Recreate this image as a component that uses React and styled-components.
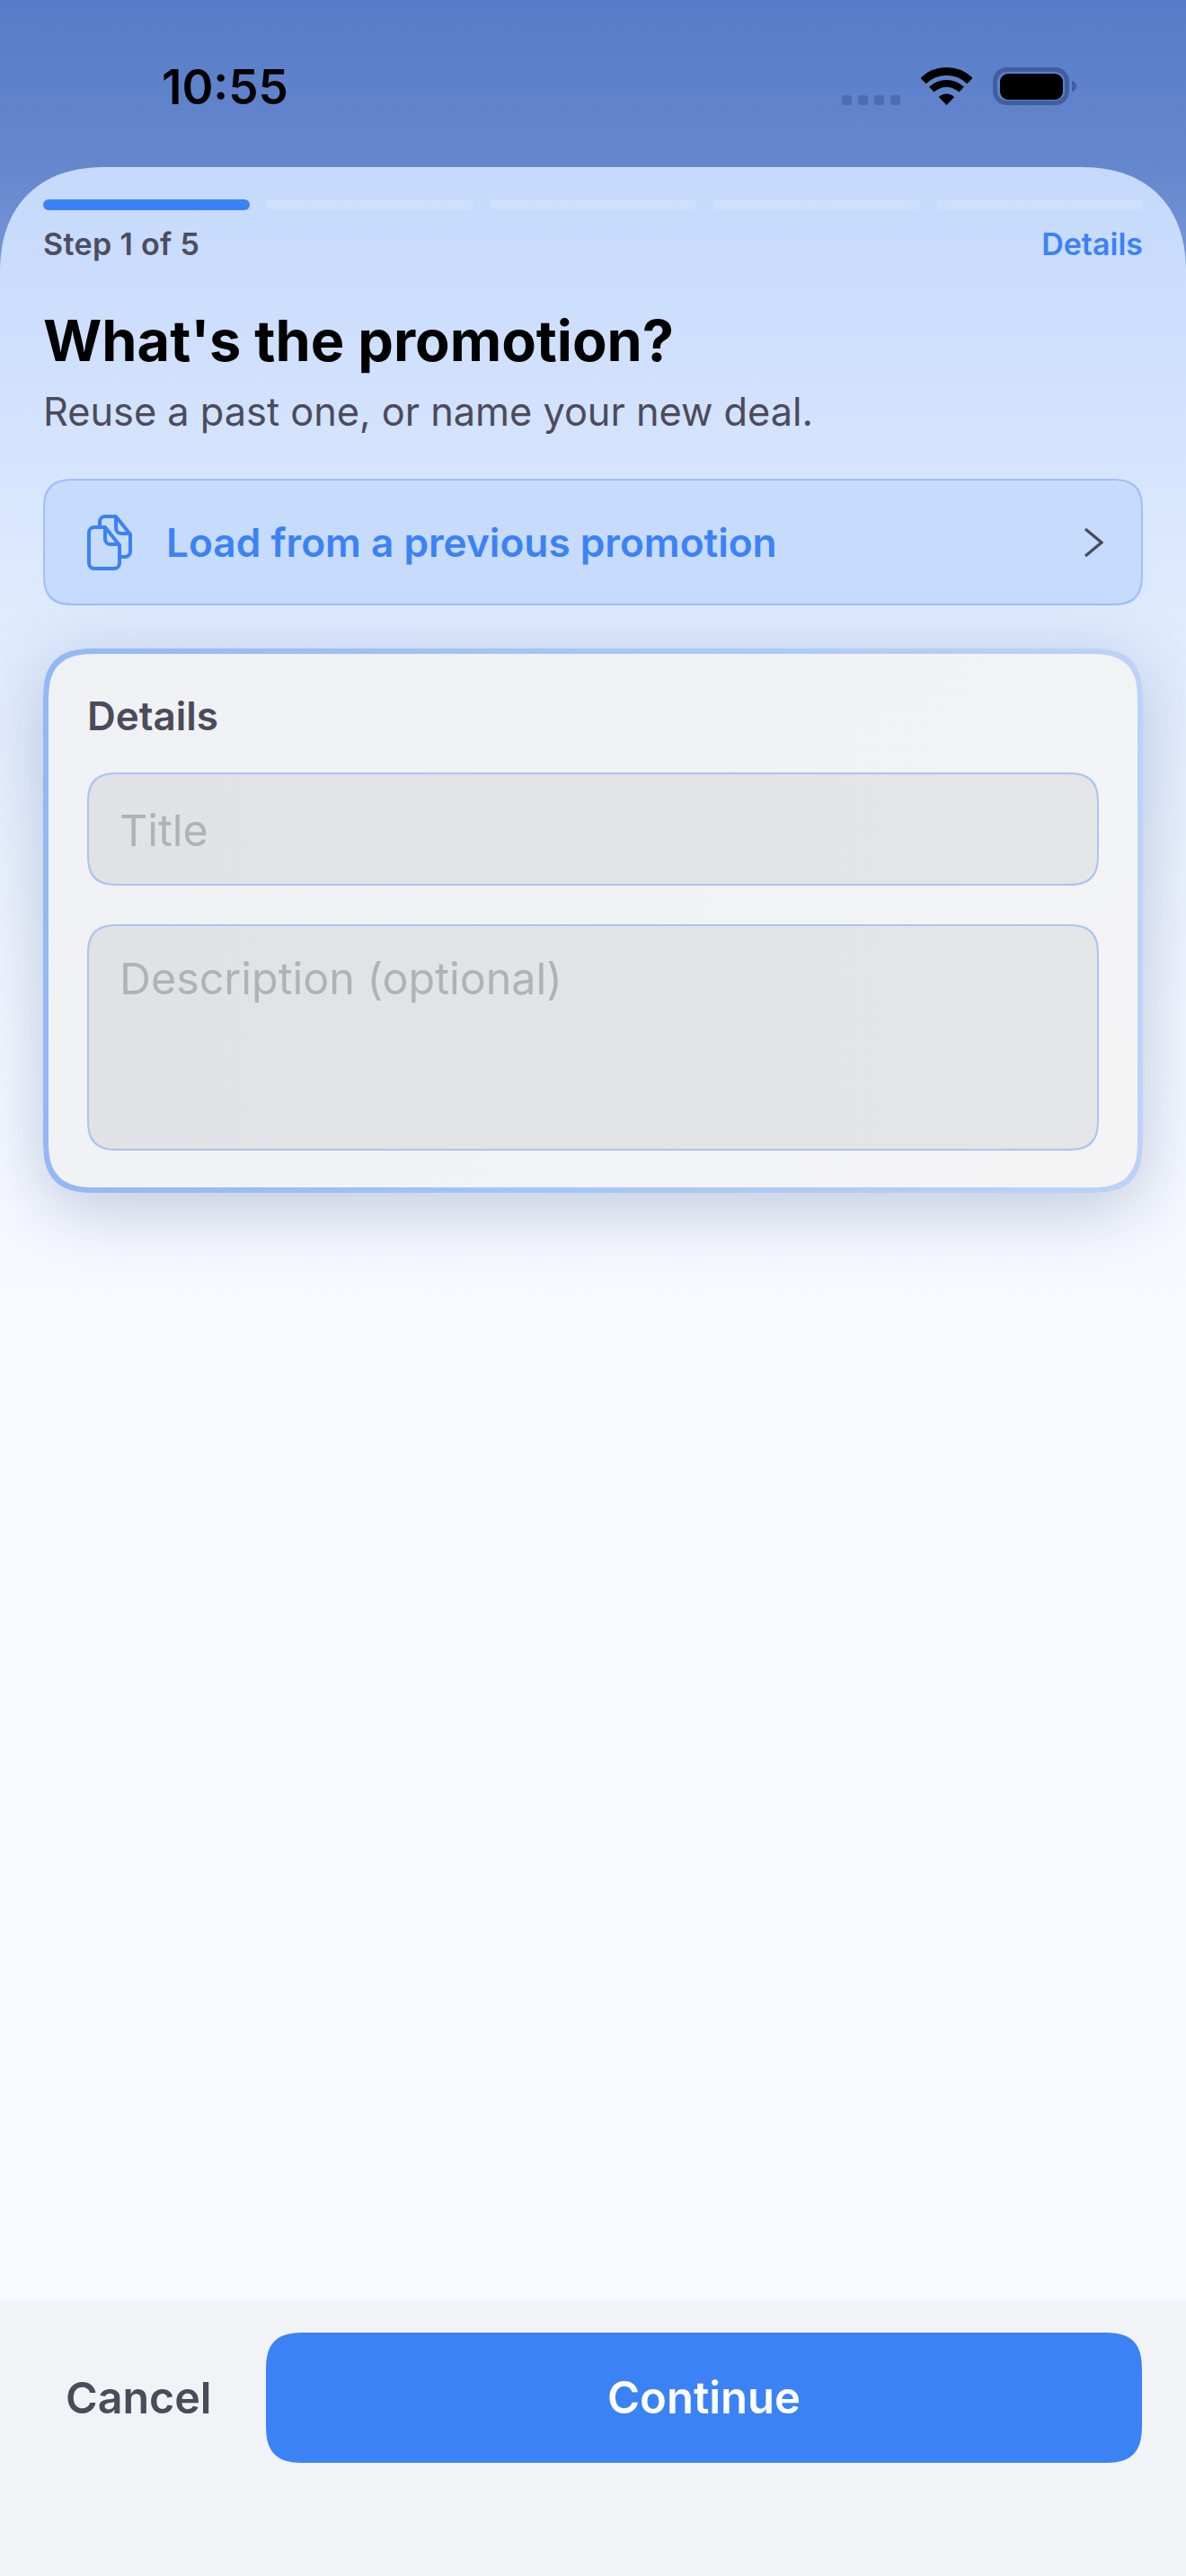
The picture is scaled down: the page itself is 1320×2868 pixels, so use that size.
import React from "react";
import styled, { createGlobalStyle } from "styled-components";

const GlobalStyle = createGlobalStyle`
  html, body {
    margin: 0;
    padding: 0;
    background: #f1f3f7;
  }
  * {
    box-sizing: border-box;
  }
`;

const Screen = styled.div`
  width: 1320px;
  height: 2868px;
  display: flex;
  flex-direction: column;
  overflow: hidden;
  font-family: Inter, "Noto Sans", sans-serif;
  background: linear-gradient(180deg, #567cc9 0, #6587cd 186px, #7d9cdc 340px);
`;

const StatusBar = styled.div`
  height: 186px;
  flex: none;
  display: flex;
  justify-content: space-between;
  align-items: flex-start;
  padding: 72px 122px 0 180px;
`;

const Clock = styled.div`
  font-size: 53px;
  line-height: 50px;
  font-weight: 600;
  color: #000;
`;

const StatusIcons = styled.div`
  height: 45px;
  display: flex;
  align-items: flex-end;
  gap: 23px;
`;

const Signal = styled.div`
  display: flex;
  gap: 7px;
`;

const SignalDot = styled.span`
  width: 11px;
  height: 11px;
  border-radius: 3px;
  background: #4c6db0;
`;

const Sheet = styled.div`
  flex: 1;
  display: flex;
  flex-direction: column;
  border-radius: 118px 118px 0 0;
  corner-shape: superellipse(1.2);
  padding: 36px 48px 0;
  background: linear-gradient(
    180deg,
    #c4d9fb 0,
    #d5e4fe 320px,
    #e6effe 620px,
    #f3f7ff 950px,
    #f9faff 1300px
  );
`;

const Progress = styled.div`
  display: flex;
  gap: 18px;
`;

const ProgressSegment = styled.div`
  flex: 1;
  height: 12px;
  border-radius: 6px;
  background: ${(props) => (props.$active ? "#3b82f6" : "rgba(255, 255, 255, 0.15)")};
`;

const StepRow = styled.div`
  display: flex;
  justify-content: space-between;
  margin-top: 18px;
  font-size: 34px;
  line-height: 40px;
  font-weight: 600;
`;

const StepLabel = styled.span`
  letter-spacing: 0.35px;
  color: #4d4d61;
`;

const StepLink = styled.span`
  color: #3b82f6;
`;

const Heading = styled.h1`
  margin: 47px 0 0;
  font-size: 63px;
  line-height: 80px;
  font-weight: 700;
  color: #000;
`;

const Subheading = styled.p`
  margin: 12px 0 0;
  font-size: 43.3px;
  line-height: 54px;
  font-weight: 400;
  color: #4b4b5c;
`;

const LoadButton = styled.div`
  height: 141px;
  margin-top: 48px;
  display: flex;
  align-items: center;
  padding: 0 42px 0 46px;
  border: 2px solid #9dc0f8;
  border-radius: 36px;
  corner-shape: superellipse(1.5);
  background: #c7dbfc;
`;

const LoadLabel = styled.span`
  flex: 1;
  margin-left: 37px;
  font-size: 44.2px;
  font-weight: 600;
  color: #3b82f6;
`;

const Card = styled.div`
  height: 606px;
  margin-top: 48px;
  padding: 43px 43px 37px 43px;
  display: flex;
  flex-direction: column;
  border: 6px solid transparent;
  border-radius: 60px;
  corner-shape: superellipse(1.5);
  background:
    linear-gradient(135deg, #eff1f4, #f4f4f5) padding-box,
    linear-gradient(90deg, #93b8f4, #bcd3f7) border-box;
  box-shadow: 0 18px 80px rgba(30, 60, 120, 0.26);
`;

const CardTitle = styled.div`
  font-size: 44px;
  line-height: 52px;
  font-weight: 600;
  color: #4b4b5a;
`;

const Field = styled.div`
  height: ${(props) => props.$height}px;
  margin-top: ${(props) => props.$top}px;
  padding: ${(props) => props.$pad}px 34px 0;
  border: 2px solid #a9c5f1;
  border-radius: 36px;
  corner-shape: superellipse(1.5);
  background: linear-gradient(90deg, #e0e2e5, #e4e5e6);
  font-size: 48.4px;
  line-height: 58px;
  color: #b1b2b8;
`;

const Footer = styled.div`
  height: 307px;
  flex: none;
  display: flex;
  align-items: flex-start;
  padding: 36px 49px 0 73px;
  background: #f1f3f7;
`;

const CancelButton = styled.div`
  width: 223px;
  height: 145px;
  display: flex;
  align-items: center;
  font-size: 48.4px;
  font-weight: 600;
  color: #4b4b5a;
`;

const ContinueButton = styled.div`
  flex: 1;
  height: 145px;
  display: flex;
  align-items: center;
  justify-content: center;
  border-radius: 44px;
  corner-shape: superellipse(1.5);
  background: #3b82f6;
  font-size: 49px;
  font-weight: 600;
  color: #fff;
`;

const WifiIcon = () => (
  <svg width="57" height="42" viewBox="0 0 57 42" fill="none">
    <path d="M2.45 15.03A37.5 37.5 0 0 1 54.55 15.03" stroke="#000" strokeWidth="9" />
    <path d="M11.83 24.74A24 24 0 0 1 45.17 24.74" stroke="#000" strokeWidth="8" />
    <path d="M28.5 42L19.82 33.01A12.5 12.5 0 0 1 37.18 33.01Z" fill="#000" />
  </svg>
);

const BatteryIcon = () => (
  <svg width="93" height="42" viewBox="0 0 93 42" fill="none">
    <rect x="2.5" y="2.5" width="80" height="37" rx="13" stroke="#3f5f9f" strokeWidth="5" />
    <rect x="8" y="7" width="70" height="29" rx="9" fill="#000" />
    <path d="M88 15C91 15.5 93 18 93 21C93 24 91 26.5 88 27Z" fill="#3f5f9f" />
  </svg>
);

const FilesIcon = () => (
  <svg width="52" height="64" viewBox="0 0 52 64" fill="none" stroke="#3b82f6" strokeWidth="4" strokeLinejoin="round" style={{ flex: "none" }}>
    <path d="M15 14V9A6 6 0 0 1 21 3H33L49 23V42A6 6 0 0 1 43 48H38" />
    <path d="M33 3V16A6 6 0 0 0 39 22H49" />
    <path d="M9 15H21L37 35V55A6 6 0 0 1 31 61H9A6 6 0 0 1 3 55V21A6 6 0 0 1 9 15Z" />
    <path d="M21 15V28A6 6 0 0 0 27 34H37" />
  </svg>
);

const ChevronIcon = () => (
  <svg width="22" height="34" viewBox="0 0 22 34" fill="none" stroke="#4a4a5a" strokeWidth="3.2">
    <path d="M2 2L20 17L2 32" />
  </svg>
);

const App = () => {
  const steps = [true, false, false, false, false];

  return (
    <Screen>
      <GlobalStyle />
      <StatusBar>
        <Clock>10:55</Clock>
        <StatusIcons>
          <Signal>
            {[0, 1, 2, 3].map((i) => (
              <SignalDot key={i} />
            ))}
          </Signal>
          <WifiIcon />
          <BatteryIcon />
        </StatusIcons>
      </StatusBar>

      <Sheet>
        <Progress>
          {steps.map((active, i) => (
            <ProgressSegment key={i} $active={active} />
          ))}
        </Progress>
        <StepRow>
          <StepLabel>Step 1 of 5</StepLabel>
          <StepLink>Details</StepLink>
        </StepRow>

        <Heading>What's the promotion?</Heading>
        <Subheading>Reuse a past one, or name your new deal.</Subheading>

        <LoadButton>
          <FilesIcon />
          <LoadLabel>Load from a previous promotion</LoadLabel>
          <ChevronIcon />
        </LoadButton>

        <Card>
          <CardTitle>Details</CardTitle>
          <Field $height={126} $top={37} $pad={34}>Title</Field>
          <Field $height={252} $top={43} $pad={30}>Description (optional)</Field>
        </Card>
      </Sheet>

      <Footer>
        <CancelButton>Cancel</CancelButton>
        <ContinueButton>Continue</ContinueButton>
      </Footer>
    </Screen>
  );
};

export default App;
